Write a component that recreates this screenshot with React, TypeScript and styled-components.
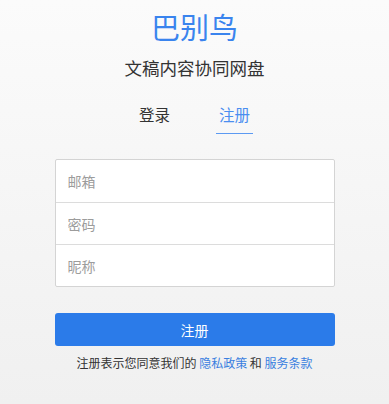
import React from 'react'
import styled, { createGlobalStyle } from 'styled-components'

const GlobalStyle = createGlobalStyle`
  html, body {
    margin: 0;
    padding: 0;
    height: 100%;
  }
  body {
    font-family: "Noto Sans CJK SC", "Noto Sans", sans-serif;
    background: linear-gradient(180deg, #fbfbfb 0%, #f0f0f0 100%);
  }
`

const Page = styled.div`
  width: 389px;
  height: 404px;
  display: flex;
  flex-direction: column;
  align-items: center;
  box-sizing: border-box;
  padding-top: 6px;
`

const Logo = styled.div`
  font-size: 29px;
  line-height: 40px;
  color: #3a84ee;
`

const Slogan = styled.div`
  margin-top: 9px;
  font-size: 17.5px;
  line-height: 26px;
  color: #333;
`

const Tabs = styled.div`
  margin-top: 22px;
  display: flex;
  gap: 43px;
`

const Tab = styled.div<{ $active?: boolean }>`
  font-size: 15.5px;
  line-height: 22px;
  padding: 0 3px 8px;
  color: ${p => (p.$active ? '#4a8ef0' : '#333')};
  border-bottom: 1.5px solid ${p => (p.$active ? '#5c9af2' : 'transparent')};
`

const Form = styled.form`
  margin-top: 25px;
  width: 280px;
  display: flex;
  flex-direction: column;
  align-items: stretch;
`

const Fields = styled.div`
  border: 1px solid #d4d4d4;
  border-radius: 2px;
  background: #fff;
`

const Field = styled.input`
  display: block;
  width: 100%;
  box-sizing: border-box;
  height: 42px;
  border: none;
  border-top: 1px solid #dcdcdc;
  padding: 0 12px;
  font-family: inherit;
  font-size: 14px;
  color: #333;
  background: transparent;
  outline: none;
  &:first-child {
    border-top: none;
  }
  &::placeholder {
    color: #9c9c9c;
  }
`

const Submit = styled.button`
  margin-top: 26px;
  height: 33px;
  border: none;
  border-radius: 3px;
  background: #2b7be9;
  color: #fff;
  font-family: inherit;
  font-size: 14px;
  cursor: pointer;
`

const Agreement = styled.p`
  margin: 8px 0 0;
  text-align: center;
  font-size: 12px;
  line-height: 18px;
  color: #333;
`

const Link = styled.a`
  color: #3a7fe0;
  text-decoration: none;
`

const App: React.FC = () => {
  return (
    <Page>
      <GlobalStyle />
      <Logo>巴别鸟</Logo>
      <Slogan>文稿内容协同网盘</Slogan>
      <Tabs>
        <Tab>登录</Tab>
        <Tab $active>注册</Tab>
      </Tabs>
      <Form onSubmit={e => e.preventDefault()}>
        <Fields>
          <Field type='email' placeholder='邮箱' />
          <Field type='password' placeholder='密码' />
          <Field type='text' placeholder='昵称' />
        </Fields>
        <Submit type='submit'>注册</Submit>
        <Agreement>
          注册表示您同意我们的 <Link href='#'>隐私政策</Link> 和 <Link href='#'>服务条款</Link>
        </Agreement>
      </Form>
    </Page>
  )
}

export default App
